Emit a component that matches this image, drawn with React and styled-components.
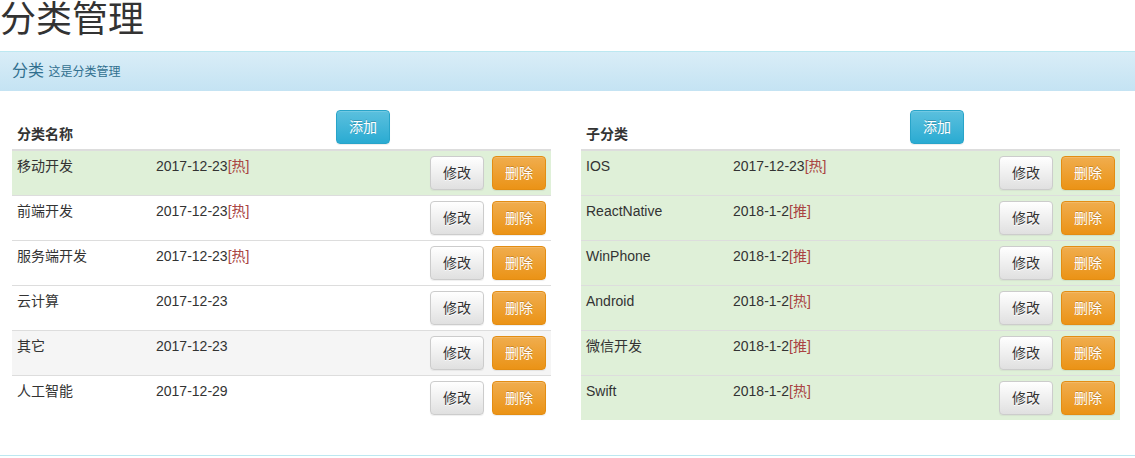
import React from "react";
import styled, { createGlobalStyle } from "styled-components";

const GlobalStyle = createGlobalStyle`
  html, body {
    margin: 0;
    padding: 0;
    background: #fff;
    font-family: "Liberation Sans", Arial, "Noto Sans CJK SC", sans-serif;
    font-size: 14px;
    line-height: 1.42857;
    color: #333;
  }
  * { box-sizing: border-box; }
`;

const categories = [
  { name: "移动开发", date: "2017-12-23", tag: "热", tone: "success" },
  { name: "前端开发", date: "2017-12-23", tag: "热" },
  { name: "服务端开发", date: "2017-12-23", tag: "热" },
  { name: "云计算", date: "2017-12-23" },
  { name: "其它", date: "2017-12-23", tone: "active" },
  { name: "人工智能", date: "2017-12-29" },
];

const children = [
  { name: "IOS", date: "2017-12-23", tag: "热", tone: "success" },
  { name: "ReactNative", date: "2018-1-2", tag: "推", tone: "success" },
  { name: "WinPhone", date: "2018-1-2", tag: "推", tone: "success" },
  { name: "Android", date: "2018-1-2", tag: "热", tone: "success" },
  { name: "微信开发", date: "2018-1-2", tag: "推", tone: "success" },
  { name: "Swift", date: "2018-1-2", tag: "热", tone: "success" },
];

const DataTable = ({ title, rows, firstCol, addAt }) => (
  <Table>
    <Head>
      <HeadCell style={{ width: firstCol }}>{title}</HeadCell>
      <HeadCell style={{ width: addAt - firstCol }} />
      <HeadCell grow>
        <Btn kind="info">添加</Btn>
      </HeadCell>
    </Head>
    {rows.map((r) => (
      <Row key={r.name} tone={r.tone}>
        <Cell style={{ width: firstCol }}>{r.name}</Cell>
        <Cell grow>
          {r.date}
          {r.tag && <Tag>[{r.tag}]</Tag>}
        </Cell>
        <Actions>
          <Btn>修改</Btn>
          <Btn kind="warning">删除</Btn>
        </Actions>
      </Row>
    ))}
  </Table>
);

const App = () => (
  <Page>
    <GlobalStyle />
    <Title>分类管理</Title>
    <Panel>
      <PanelHeading>
        分类 <small>这是分类管理</small>
      </PanelHeading>
      <PanelBody>
        <DataTable title="分类名称" rows={categories} firstCol={139} addAt={319} />
        <DataTable title="子分类" rows={children} firstCol={147} addAt={324} />
      </PanelBody>
    </Panel>
  </Page>
);

export default App;

const Page = styled.div`
  width: 1135px;
  height: 458px;
  overflow: hidden;
`;

const Title = styled.h1`
  margin: 0 0 11px;
  font-size: 36px;
  font-weight: 400;
  line-height: 40px;
  color: #333;
  font-family: "Liberation Sans", "Noto Sans CJK SC", sans-serif;
`;

const Panel = styled.div`
  border-top: 1px solid #bce8f1;
  border-bottom: 1px solid #bce8f1;
`;

const PanelHeading = styled.div`
  padding: 9px 12px;
  font-size: 16px;
  line-height: 20px;
  color: #31708f;
  background: linear-gradient(to bottom, #d9edf7 0%, #c4e3f3 100%);

  small {
    font-size: 12px;
  }
`;

const PanelBody = styled.div`
  display: grid;
  grid-template-columns: 539px 539px;
  column-gap: 30px;
  padding: 14px 15px 35px 12px;
`;

const Table = styled.div`
  display: flex;
  flex-direction: column;
`;

const Head = styled.div`
  display: flex;
  align-items: flex-end;
  border-bottom: 2px solid #ddd;
`;

const HeadCell = styled.div`
  padding: 5px;
  font-weight: bold;
  line-height: 20px;
  flex: ${(p) => (p.grow ? "1" : "none")};
`;

const toneBg = {
  success: "#dff0d8",
  active: "#f5f5f5",
};

const Row = styled.div`
  display: flex;
  align-items: flex-start;
  background: ${(p) => toneBg[p.tone] || "transparent"};
  & + & {
    border-top: 1px solid #ddd;
  }
`;

const Cell = styled.div`
  padding: 5px;
  line-height: 20px;
  flex: ${(p) => (p.grow ? "1" : "none")};
`;

const Tag = styled.span`
  color: #a94442;
`;

const Actions = styled.div`
  display: flex;
  gap: 8px;
  padding: 5px;
`;

const kinds = {
  default: {
    bg: "linear-gradient(to bottom, #fff 0%, #e0e0e0 100%)",
    border: "#ccc",
    color: "#333",
    shadow: "0 1px 0 rgba(255,255,255,.15), 0 1px 1px rgba(0,0,0,.075)",
  },
  info: {
    bg: "linear-gradient(to bottom, #5bc0de 0%, #2aabd2 100%)",
    border: "#28a4c9",
    color: "#fff",
    shadow: "inset 0 1px 0 rgba(255,255,255,.15), 0 1px 1px rgba(0,0,0,.075)",
  },
  warning: {
    bg: "linear-gradient(to bottom, #f0ad4e 0%, #eb9316 100%)",
    border: "#e38d13",
    color: "#fff",
    shadow: "inset 0 1px 0 rgba(255,255,255,.15), 0 1px 1px rgba(0,0,0,.075)",
  },
};

const Btn = styled.button`
  display: inline-block;
  height: 34px;
  padding: 6px 12px;
  font-family: inherit;
  font-size: 14px;
  font-weight: normal;
  line-height: 20px;
  border-radius: 4px;
  cursor: pointer;
  background: ${(p) => kinds[p.kind || "default"].bg};
  border: 1px solid ${(p) => kinds[p.kind || "default"].border};
  color: ${(p) => kinds[p.kind || "default"].color};
  box-shadow: ${(p) => kinds[p.kind || "default"].shadow};
  text-shadow: ${(p) => (p.kind ? "0 -1px 0 rgba(0,0,0,.2)" : "0 1px 0 #fff")};
`;
